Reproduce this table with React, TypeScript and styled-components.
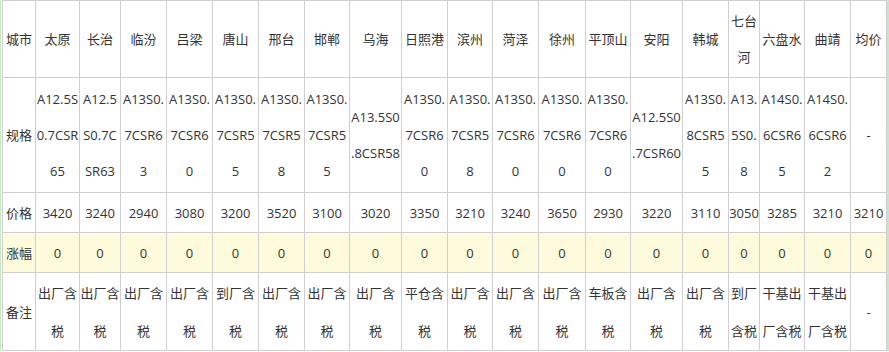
import React from 'react';
import styled, { createGlobalStyle } from 'styled-components';

const GlobalStyle = createGlobalStyle`
  html, body {
    margin: 0;
    padding: 0;
    background: #fff;
  }
  body {
    font-family: "Open Sans", "Noto Sans CJK SC", sans-serif;
    color: #333;
  }
`;

const Frame = styled.div`
  width: 889px;
  border-left: 1px solid #c6e6c6;
  border-right: 2px solid #c6e6c6;
  padding-left: 1px;
  box-sizing: border-box;
`;

const Table = styled.table`
  border-collapse: collapse;
  table-layout: fixed;
  width: 884px;
  font-size: 13px;
`;

const Row = styled.tr<{ $h: number; $lh: number; $bg?: string }>`
  height: ${(p) => p.$h}px;
  line-height: ${(p) => p.$lh}px;
  background: ${(p) => p.$bg || '#fff'};
`;

const Cell = styled.td`
  border: 1px solid #cfcfcf;
  padding: 0;
  text-align: center;
  vertical-align: middle;
  word-break: break-all;
  color: #333;
`;

const SpecLine = styled.span`
  display: block;
  white-space: nowrap;
  margin: 0 -3px;
`;

const widths = [33, 44, 41, 46, 46, 46, 46, 45, 52, 46, 45, 46, 47, 45, 52, 46, 31, 45, 46, 36];

const cities = ['城市', '太原', '长治', '临汾', '吕梁', '唐山', '邢台', '邯郸', '乌海', '日照港', '滨州', '菏泽', '徐州', '平顶山', '安阳', '韩城', '七台河', '六盘水', '曲靖', '均价'];

// spec values, split where the narrow columns wrap them
const specs: string[][] = [
  ['规格'],
  ['A12.5S', '0.7CSR', '65'],
  ['A12.5', 'S0.7C', 'SR63'],
  ['A13S0.', '7CSR6', '3'],
  ['A13S0.', '7CSR6', '0'],
  ['A13S0.', '7CSR5', '5'],
  ['A13S0.', '7CSR5', '8'],
  ['A13S0.', '7CSR5', '5'],
  ['A13.5S0', '.8CSR58'],
  ['A13S0.', '7CSR6', '0'],
  ['A13S0.', '7CSR5', '8'],
  ['A13S0.', '7CSR6', '0'],
  ['A13S0.', '7CSR6', '0'],
  ['A13S0.', '7CSR6', '0'],
  ['A12.5S0', '.7CSR60'],
  ['A13S0.', '8CSR5', '5'],
  ['A13.', '5S0.', '8'],
  ['A14S0.', '6CSR6', '5'],
  ['A14S0.', '6CSR6', '2'],
  ['-'],
];

const prices = ['价格', '3420', '3240', '2940', '3080', '3200', '3520', '3100', '3020', '3350', '3210', '3240', '3650', '2930', '3220', '3110', '3050', '3285', '3210', '3210'];

const changes = ['涨幅', ...Array(19).fill('0')];

const notes = ['备注', '出厂含税', '出厂含税', '出厂含税', '出厂含税', '到厂含税', '出厂含税', '出厂含税', '出厂含税', '平仓含税', '出厂含税', '出厂含税', '出厂含税', '车板含税', '出厂含税', '出厂含税', '到厂含税', '干基出厂含税', '干基出厂含税', '-'];

export default function App() {
  return (
    <>
      <GlobalStyle />
      <Frame>
        <Table>
          <colgroup>
            {widths.map((w, i) => (
              <col key={i} style={{ width: w }} />
            ))}
          </colgroup>
          <tbody>
            <Row $h={77} $lh={36}>
              {cities.map((c, i) => <Cell key={i}>{c}</Cell>)}
            </Row>
            <Row $h={115} $lh={36}>
              {specs.map((lines, i) => (
                <Cell key={i}>
                  {lines.map((l, j) => <SpecLine key={j}>{l}</SpecLine>)}
                </Cell>
              ))}
            </Row>
            <Row $h={40} $lh={36}>
              {prices.map((c, i) => <Cell key={i}>{c}</Cell>)}
            </Row>
            <Row $h={40} $lh={36} $bg="#fdfbdb">
              {changes.map((c, i) => <Cell key={i}>{c}</Cell>)}
            </Row>
            <Row $h={78} $lh={38}>
              {notes.map((c, i) => <Cell key={i}>{c}</Cell>)}
            </Row>
          </tbody>
        </Table>
      </Frame>
    </>
  );
}
